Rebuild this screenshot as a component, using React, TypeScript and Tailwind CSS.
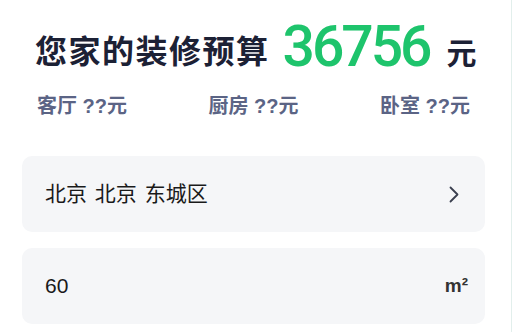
import React from 'react';

const cjk = "font-['Liberation_Sans','Noto_Sans_CJK_SC',sans-serif]";

const Chevron: React.FC = () => (
  <svg width="10" height="17" viewBox="0 0 10 17" fill="none">
    <path d="M1.5 1.5 L8.5 8.5 L1.5 15.5" stroke="#3a3f4f" strokeWidth="1.8" strokeLinecap="round" strokeLinejoin="round" />
  </svg>
);

const App: React.FC = () => {
  const rooms = [
    { name: '客厅', price: '??' },
    { name: '厨房', price: '??' },
    { name: '卧室', price: '??' }
  ];
  return <div className={`w-[512px] h-[332px] bg-white border-r border-[#e2efec] overflow-hidden ${cjk}`}>
      <div className="flex items-baseline pl-[35px] pt-[18px] h-[66px]">
        <span className="-translate-y-[3px] text-[32px] leading-none font-bold tracking-[1.5px] text-[#1c2135]">您家的装修预算</span>
        <span className="ml-[13px] font-['Roboto',sans-serif] text-[57px] leading-none font-medium tracking-[-3px] text-[#1ec46c]">36756</span>
        <span className="-translate-y-[2px] ml-[17px] text-[30px] leading-none font-bold text-[#1c2135]">元</span>
      </div>
      <div className="flex justify-between pl-[37px] pr-[41px] mt-[30px] text-[20px] leading-none font-bold text-[#5b6485]">
        {rooms.map(r => <span key={r.name}>{r.name} {r.price}元</span>)}
      </div>
      <div className="ml-[22px] mr-[26px] mt-[40px] flex flex-col gap-4">
        <div className="h-[76px] rounded-[10px] bg-[#f5f6f8] flex items-center justify-between pl-[23px] pr-[26px]">
          <span className="text-[21px] text-[#1a1a1a] [word-spacing:2px]">北京 北京 东城区</span>
          <Chevron />
        </div>
        <div className="h-[76px] rounded-[10px] bg-[#f5f6f8] flex items-center justify-between pl-[23px] pr-[17px]">
          <span className="text-[21px] text-[#1a1a1a]">60</span>
          <span className="text-[19px] font-bold text-[#333333]">m²</span>
        </div>
      </div>
    </div>;
};
export default App;
